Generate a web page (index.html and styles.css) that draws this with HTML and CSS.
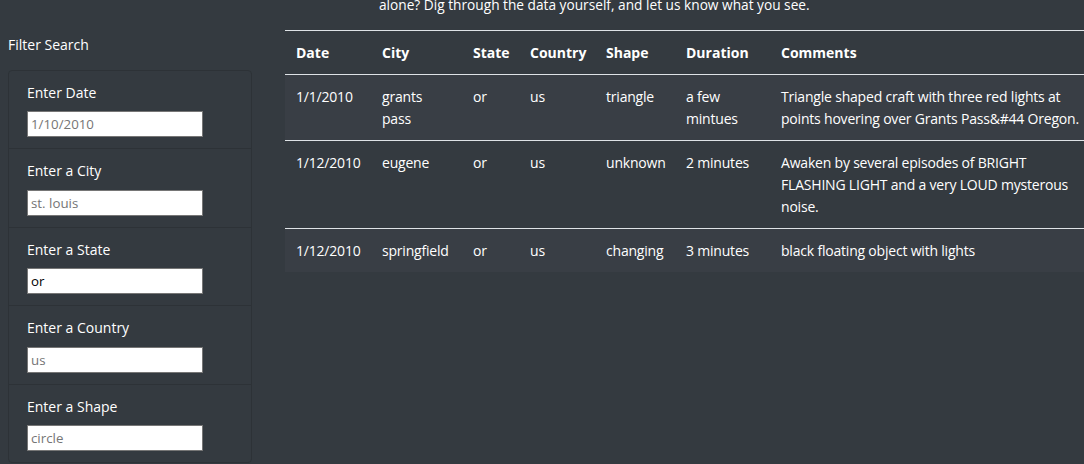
FILE: index.html
```html
<!DOCTYPE html>
<html lang="en">
<head>
<meta charset="utf-8">
<title>UFO Sightings</title>
<link rel="stylesheet" href="styles.css">
</head>
<body>
<div class="page">
  <aside class="sidebar">
    <div class="filter-title">Filter Search</div>
    <ul class="filters">
      <li class="filter-item">
        <label class="filter-label" for="datetime">Enter Date</label>
        <input class="filter-input" id="datetime" type="text" placeholder="1/10/2010">
      </li>
      <li class="filter-item">
        <label class="filter-label" for="city">Enter a City</label>
        <input class="filter-input" id="city" type="text" placeholder="st. louis">
      </li>
      <li class="filter-item">
        <label class="filter-label" for="state">Enter a State</label>
        <input class="filter-input" id="state" type="text" value="or">
      </li>
      <li class="filter-item">
        <label class="filter-label" for="country">Enter a Country</label>
        <input class="filter-input" id="country" type="text" placeholder="us">
      </li>
      <li class="filter-item">
        <label class="filter-label" for="shape">Enter a Shape</label>
        <input class="filter-input" id="shape" type="text" placeholder="circle">
      </li>
    </ul>
  </aside>
  <main class="content">
    <p class="intro">alone? Dig through the data yourself, and let us know what you see.</p>
    <table class="ufo-table">
      <colgroup>
        <col class="c-date"><col class="c-city"><col class="c-state"><col class="c-country"><col class="c-shape"><col class="c-duration"><col class="c-comments">
      </colgroup>
      <thead>
        <tr>
          <th>Date</th><th>City</th><th>State</th><th>Country</th><th>Shape</th><th>Duration</th><th>Comments</th>
        </tr>
      </thead>
      <tbody>
        <tr>
          <td>1/1/2010</td><td>grants pass</td><td>or</td><td>us</td><td>triangle</td><td>a few mintues</td><td>Triangle shaped craft with three red lights at points hovering over Grants Pass&amp;#44 Oregon.</td>
        </tr>
        <tr>
          <td>1/12/2010</td><td>eugene</td><td>or</td><td>us</td><td>unknown</td><td>2 minutes</td><td>Awaken by several episodes of BRIGHT FLASHING LIGHT and a very LOUD mysterous noise.</td>
        </tr>
        <tr>
          <td>1/12/2010</td><td>springfield</td><td>or</td><td>us</td><td>changing</td><td>3 minutes</td><td>black floating object with lights</td>
        </tr>
      </tbody>
    </table>
  </main>
</div>
</body>
</html>
```

FILE: styles.css
```css
html, body {
  margin: 0;
  padding: 0;
  overflow: hidden;
}
body {
  background: #343a40;
  color: #ffffff;
  font-family: "Open Sans", "Liberation Sans", sans-serif;
  font-size: 14px;
  line-height: 22px;
}
.page {
  display: flex;
  align-items: flex-start;
  gap: 33px;
  padding-left: 8px;
}
.sidebar {
  flex: 0 0 244px;
  padding-top: 34px;
}
.filter-title {
  margin-bottom: 14px;
}
.filters {
  list-style: none;
  margin: 0;
  padding: 0;
  border: 1px solid #2d3237;
  border-radius: 4px;
}
.filter-item {
  padding: 11px 18px 11px;
  border-top: 1px solid #2d3237;
  display: flex;
  flex-direction: column;
  align-items: flex-start;
}
.filter-item:first-child {
  border-top: none;
}
.filter-label {
  margin-bottom: 7.4px;
}
.filter-input {
  box-sizing: border-box;
  width: 176px;
  height: 26px;
  margin: 0;
  padding: 1px 3px;
  border: 1px solid #767676;
  background: #ffffff;
  color: #000000;
  font-family: "Open Sans", "Liberation Sans", sans-serif;
  font-size: 13.3px;
}
.filter-input::placeholder {
  color: #757575;
  opacity: 1;
}
.content {
  flex: 0 0 auto;
}
.intro {
  margin: -6px 0 14px 94px;
  white-space: nowrap;
  font-size: 13.7px;
}
.ufo-table {
  border-collapse: collapse;
  table-layout: fixed;
  width: 815px;
}
.c-date { width: 86px; }
.c-city { width: 91px; }
.c-state { width: 57px; }
.c-country { width: 76px; }
.c-shape { width: 80px; }
.c-duration { width: 95px; }
.c-comments { width: 330px; }
.ufo-table th,
.ufo-table td {
  padding: 10.5px 11px;
  text-align: left;
  vertical-align: top;
  border-top: 1px solid #dee2e6;
}
.ufo-table td {
  letter-spacing: -0.2px;
}
.ufo-table th {
  font-weight: 700;
}
.ufo-table thead th {
  border-bottom: 1px solid #dee2e6;
}
.ufo-table tbody tr:nth-child(odd) {
  background: #393e45;
}
```
